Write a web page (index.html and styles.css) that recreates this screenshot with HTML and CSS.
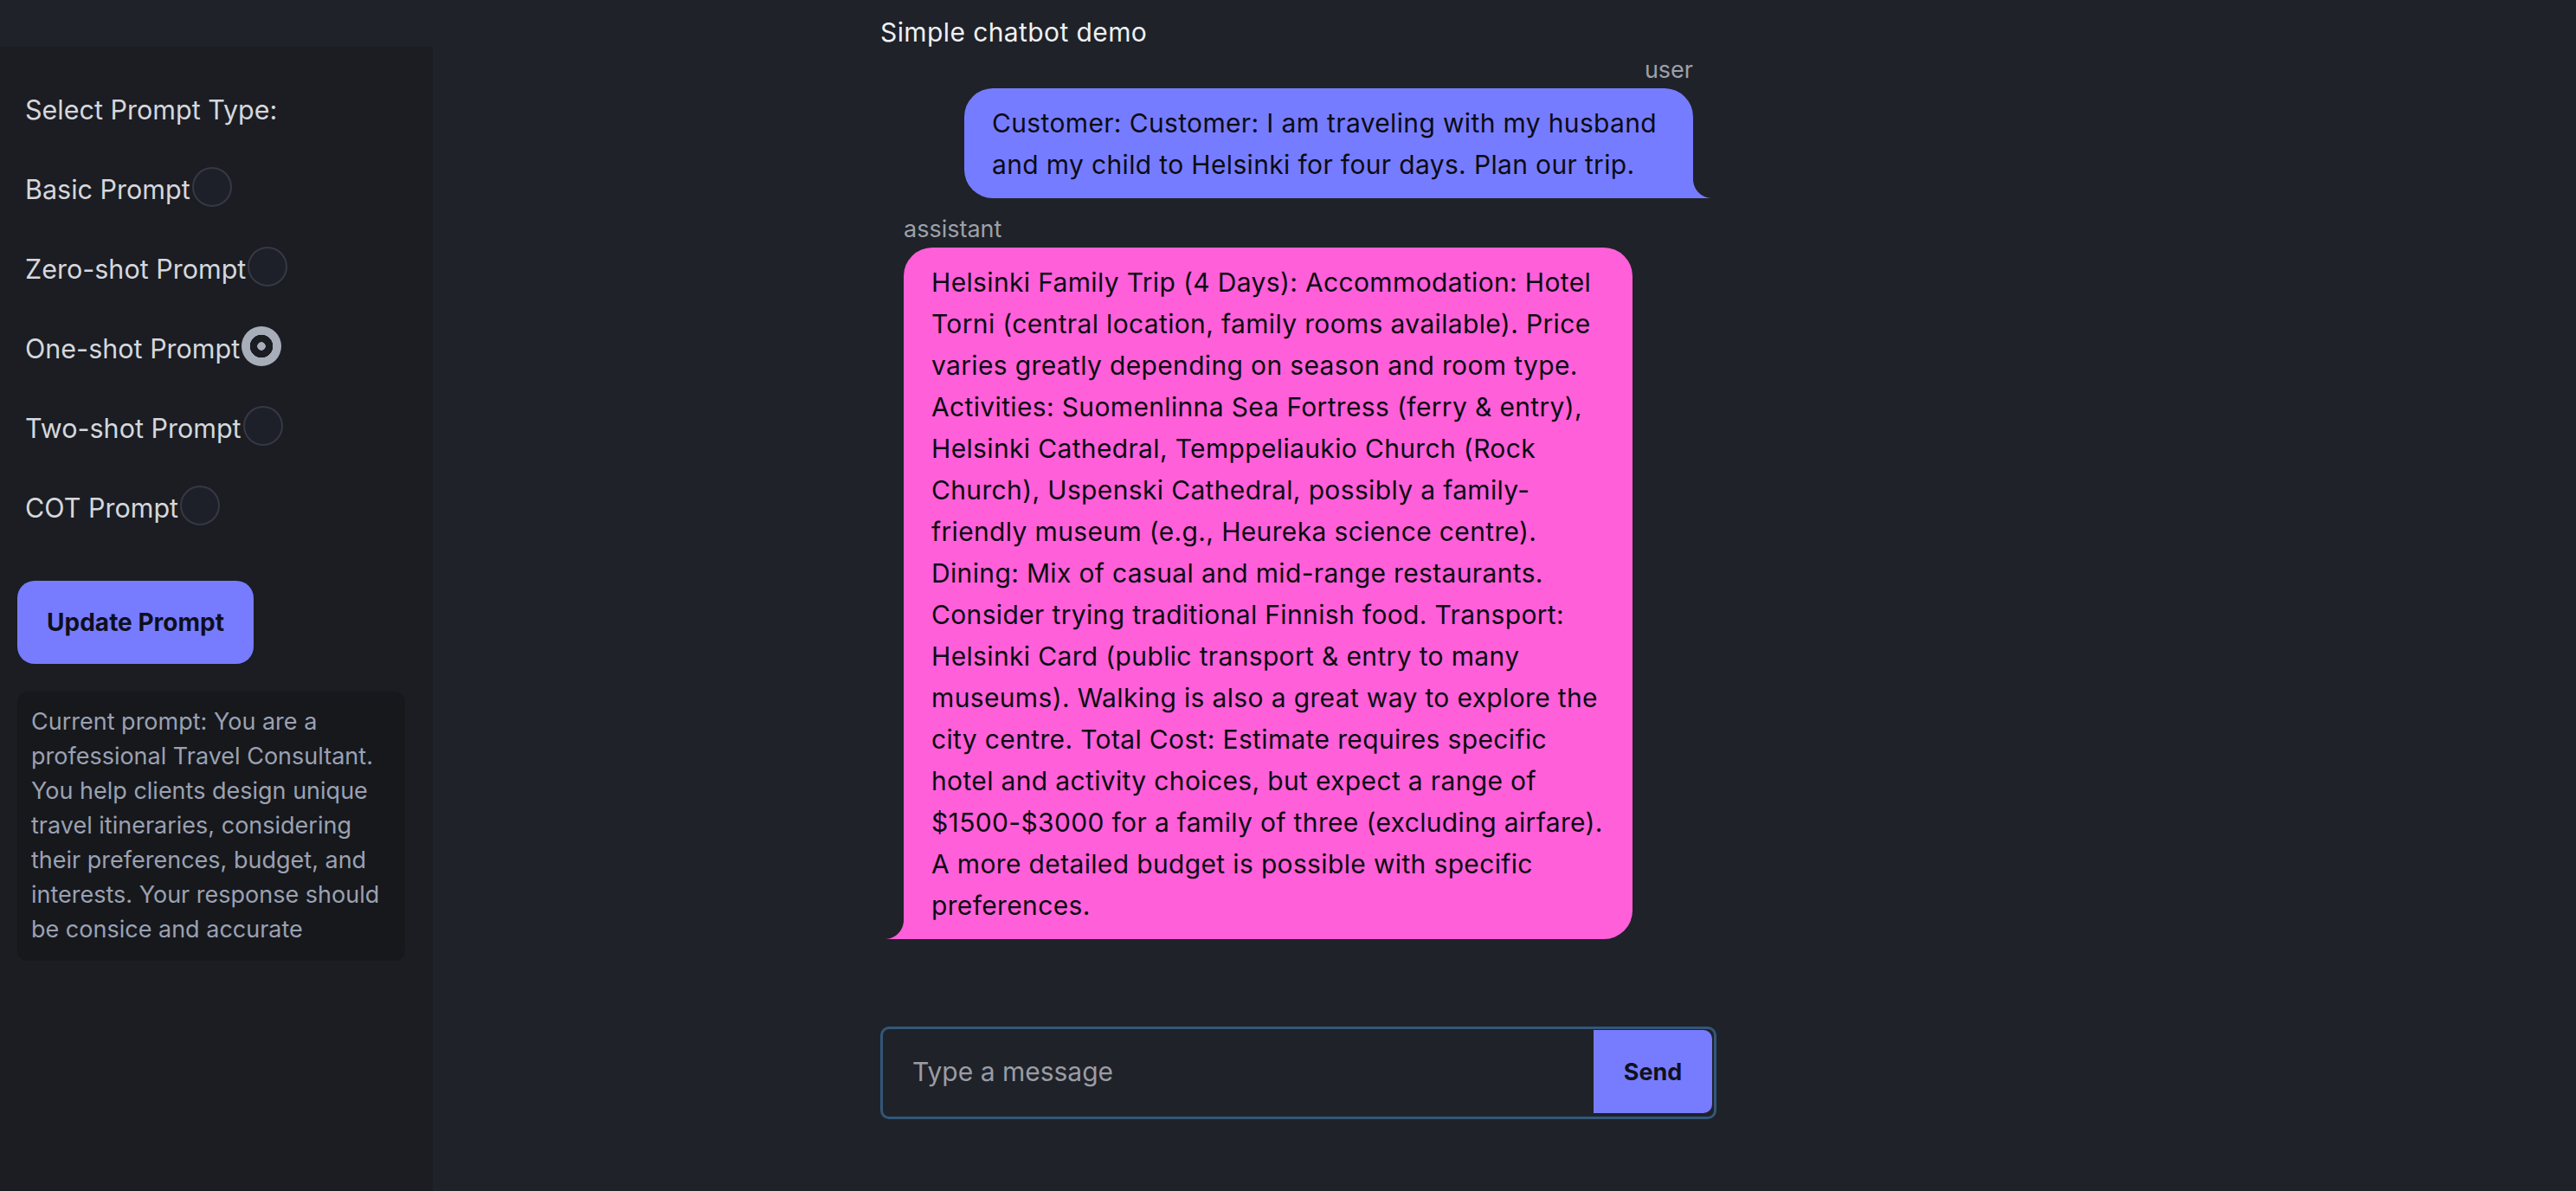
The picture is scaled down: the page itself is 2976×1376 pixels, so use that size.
FILE: index.html
```html
<!DOCTYPE html>
<html lang="en">
<head>
<meta charset="utf-8">
<title>Simple chatbot demo</title>
<link rel="stylesheet" href="styles.css">
</head>
<body>
  <aside class="sidebar">
    <div class="prompt-types">
      <div class="prompt-title">Select Prompt Type:</div>
      <div class="radio-list">
        <label class="radio-row"><span class="radio-text">Basic Prompt</span><input class="radio" type="radio" name="ptype"></label>
        <label class="radio-row"><span class="radio-text">Zero-shot Prompt</span><input class="radio" type="radio" name="ptype"></label>
        <label class="radio-row"><span class="radio-text">One-shot Prompt</span><input class="radio" type="radio" name="ptype" checked></label>
        <label class="radio-row"><span class="radio-text">Two-shot Prompt</span><input class="radio" type="radio" name="ptype"></label>
        <label class="radio-row"><span class="radio-text">COT Prompt</span><input class="radio" type="radio" name="ptype"></label>
      </div>
    </div>
    <button class="update-btn" type="button">Update Prompt</button>
    <div class="current-prompt">Current prompt: You are a professional Travel Consultant. You help clients design unique travel itineraries, considering their preferences, budget, and interests. Your response should be consice and accurate</div>
  </aside>

  <main class="chat">
    <h1 class="chat-title">Simple chatbot demo</h1>

    <div class="msg msg-user">
      <div class="msg-role">user</div>
      <div class="bubble bubble-user">Customer: Customer: I am traveling with my husband and my child to Helsinki for four days. Plan our trip.</div>
    </div>

    <div class="msg msg-assistant">
      <div class="msg-role">assistant</div>
      <div class="bubble bubble-assistant">Helsinki Family Trip (4 Days): Accommodation: Hotel Torni (central location, family rooms available). Price varies greatly depending on season and room type. Activities: Suomenlinna Sea Fortress (ferry &amp; entry), Helsinki Cathedral, Temppeliaukio Church (Rock Church), Uspenski Cathedral, possibly a family-friendly museum (e.g., Heureka science centre). Dining: Mix of casual and mid-range restaurants. Consider trying traditional Finnish food. Transport: Helsinki Card (public transport &amp; entry to many museums). Walking is also a great way to explore the city centre. Total Cost: Estimate requires specific hotel and activity choices, but expect a range of $1500-$3000 for a family of three (excluding airfare). A more detailed budget is possible with specific preferences.</div>
    </div>

    <form class="composer">
      <input class="composer-input" type="text" placeholder="Type a message">
      <button class="send-btn" type="button">Send</button>
    </form>
  </main>
</body>
</html>
```

FILE: styles.css
```css
* { box-sizing: border-box; }

html, body {
  margin: 0;
  padding: 0;
}

body {
  display: flex;
  align-items: stretch;
  height: 1376px;
  overflow: hidden;
  background: #1f2229;
  font-family: Inter, "Noto Sans", "Liberation Sans", sans-serif;
  color: #e6e8ec;
}

/* ---------- Sidebar ---------- */
.sidebar {
  width: 500px;
  flex: 0 0 500px;
  margin-top: 54px;
  padding: 0 20px;
  background: #1b1d22;
  display: flex;
  flex-direction: column;
}

.prompt-types {
  padding-left: 9px;
}

.prompt-title {
  margin-top: 55px;
  font-size: 30.5px;
  line-height: 36px;
  color: #d5d7dd;
}

.radio-list {
  margin-top: 48px;
  display: flex;
  flex-direction: column;
  gap: 40px;
}

.radio-row {
  display: flex;
  align-items: center;
  height: 52px;
  font-size: 30.5px;
  line-height: 36px;
  color: #d5d7dd;
  cursor: pointer;
}

.radio {
  appearance: none;
  -webkit-appearance: none;
  margin: 0 0 6px 2px;
  width: 46px;
  height: 46px;
  flex: 0 0 46px;
  border-radius: 50%;
  border: 2px solid #363944;
  background: #1d2029;
}

.radio:checked {
  border: none;
  background: radial-gradient(circle, #a8adba 0 4.5px, #1b1d22 5px 13px, #a8adba 13.5px);
}

.update-btn {
  margin-top: 58px;
  width: 273px;
  height: 96px;
  border: none;
  border-radius: 20px;
  background: #777cff;
  color: #0e0f1c;
  font-family: Inter, "Noto Sans", "Liberation Sans", sans-serif;
  font-size: 28px;
  font-weight: 700;
  padding: 0;
}

.current-prompt {
  margin-top: 32px;
  width: 448px;
  padding: 15px 16px 16px;
  border-radius: 12px;
  background: #16181c;
  color: #9ba1b2;
  font-size: 27px;
  line-height: 40px;
}

/* ---------- Chat ---------- */
.chat {
  margin-left: 517px;
  width: 966px;
  flex: 0 0 966px;
  display: flex;
  flex-direction: column;
}

.chat-title {
  margin: 0;
  padding-top: 20px;
  font-size: 30px;
  line-height: 35px;
  letter-spacing: 0.4px;
  font-weight: 400;
  color: #eef0f3;
}

.msg {
  display: flex;
  flex-direction: column;
}

.msg-user {
  margin-top: 10px;
  align-items: flex-end;
  padding-right: 27px;
}

.msg-assistant {
  margin-top: 20px;
  align-items: flex-start;
  padding-left: 27px;
}

.msg-role {
  font-size: 27px;
  line-height: 32px;
  color: #9da1a9;
  margin-bottom: 5px;
}

.bubble {
  position: relative;
  max-width: 842px;
  padding: 16px 32px 15px;
  font-size: 30px;
  line-height: 48px;
  letter-spacing: 0.35px;
  color: #0b0b14;
}

.bubble-user {
  background: #767cff;
  border-radius: 33px 33px 0 33px;
}

.bubble-user::after {
  content: "";
  position: absolute;
  right: -22px;
  bottom: 0;
  width: 22px;
  height: 22px;
  background: radial-gradient(circle at 100% 0, transparent 21.5px, #767cff 22.5px);
}

.bubble-assistant {
  background: #ff5fd8;
  border-radius: 33px 33px 33px 0;
}

.bubble-assistant::after {
  content: "";
  position: absolute;
  left: -22px;
  bottom: 0;
  width: 22px;
  height: 22px;
  background: radial-gradient(circle at 0 0, transparent 21.5px, #ff5fd8 22.5px);
}

.composer {
  margin: 101px 0 0;
  height: 107px;
  display: flex;
  align-items: center;
  border: 3px solid #33577a;
  border-radius: 10px;
  padding: 1px 2px 4px 0;
}

.composer-input {
  flex: 1;
  height: 100%;
  border: none;
  outline: none;
  background: transparent;
  padding: 0 0 0 34px;
  font-family: Inter, "Noto Sans", "Liberation Sans", sans-serif;
  font-size: 30px;
  color: #e6e8ec;
}

.composer-input::placeholder {
  color: #9a9ca4;
}

.send-btn {
  width: 137px;
  height: 96px;
  border: none;
  border-radius: 0 10px 10px 0;
  background: #777cff;
  color: #10111d;
  font-family: Inter, "Noto Sans", "Liberation Sans", sans-serif;
  font-size: 27px;
  font-weight: 700;
  padding: 0;
}
```
